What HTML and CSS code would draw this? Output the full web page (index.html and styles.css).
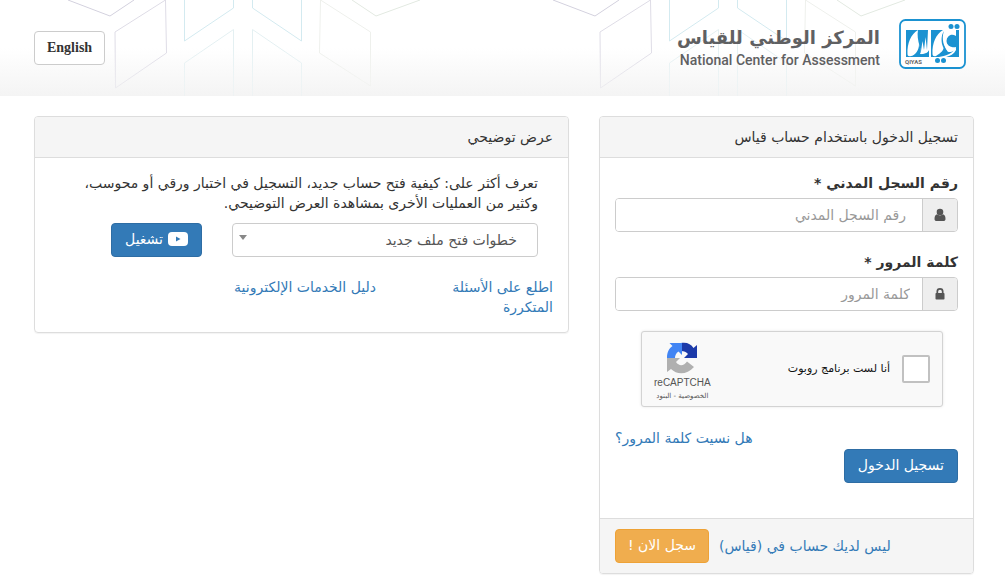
FILE: index.html
```html
<!DOCTYPE html>
<html lang="ar" dir="rtl">
<head>
<meta charset="utf-8">
<meta name="viewport" content="width=device-width, initial-scale=1">
<title>المركز الوطني للقياس</title>
<link rel="stylesheet" href="styles.css">
</head>
<body>
<header class="site-header">
  <svg class="header-pattern" aria-hidden="true" fill="none">
    <defs>
      <pattern id="hex" width="485" height="96" patternUnits="userSpaceOnUse">
        <path stroke="#d3d1de" d="M68 0L110 16L134 0"/>
        <path stroke="#dedce6" d="M165.500 0L115 32L115.500 88L166.500 53Z"/>
        <path stroke="#d3eaf0" d="M184.500 0V41L233.500 8V0M252.500 0V8L301.500 41V0"/>
        <path stroke="#e4f0f2" d="M184.500 96V63L233.500 29.500V96M252.500 96V29.500L301.500 63V96"/>
        <path stroke="#eef0ec" d="M320.500 0L370.500 32V86L319.500 53Z"/>
        <path stroke="#e2e9e1" d="M352 0L376 16L420 0"/>
      </pattern>
    </defs>
    <rect width="100%" height="96" fill="url(#hex)"/>
  </svg>
  <div class="header-inner">
    <div class="brand">
      <svg class="brand-mark" viewBox="0 0 68 51" role="img" aria-label="QIYAS">
        <rect x="1" y="1" width="65" height="48" rx="5.500" fill="#fff" stroke="#1b92d1" stroke-width="1.800"/>
        <path fill="#1b92d1" d="M7 11H30V38H7ZM32 11H60V38H32Z"/>
        <path fill="#fff" d="M19 11C12 15 8 24 8.500 35C8.500 37 10 37.500 12 37L24 35C28 34 29.500 33 30 31V11H29L28 31L26.500 18L25 31L23.500 22L22 32L20.500 27C19 21 18 16 19 11Z"/>
        <path fill="#1b92d1" d="M20 25C20 31 17 35 12 38H30V32C28 35 25 36 21 35C23 32 21 28 20 25Z"/>
        <path fill="#fff" d="M44 11C37 15 33 24 33.500 35C33.500 37 35 37.500 37 37C42 34 45 31 45 27C47 31 48 33 50 33C54 33 57 31 57 28C53 29 48 27 48 22C48 17 52 14 57 17V11Z"/>
        <path fill="#fff" d="M40 38C46 37 54 35 57 28L57 31C55 35 51 37 47 38Z"/>
        <circle cx="53" cy="22" r="5.500" fill="#1b92d1"/>
        <path fill="#1b92d1" d="M45 12C42 20 45 28 49 33C46 32 44 29 43 25C42 19 43 15 45 12Z"/>
        <g fill="#1b92d1"><circle cx="52" cy="7.500" r="2.500"/><circle cx="58" cy="7.500" r="2.500"/><circle cx="38.500" cy="41.500" r="2.500"/><circle cx="44.500" cy="41.500" r="2.500"/></g>
        <text x="6" y="45" class="mark-text">QIYAS</text>
      </svg>
      <div class="brand-name">
        <strong class="brand-ar">المركز الوطني للقياس</strong>
        <span class="brand-en" dir="ltr">National Center for Assessment</span>
      </div>
    </div>
    <button type="button" class="btn btn-lang" lang="en">English</button>
  </div>
</header>

<main class="layout">
  <section class="panel">
    <h2 class="panel-heading">تسجيل الدخول باستخدام حساب قياس</h2>
    <form>
      <div class="panel-body">
        <div class="field">
          <label for="nid">رقم السجل المدني *</label>
          <div class="input-group">
            <span class="addon"><svg width="12" height="14" viewBox="0 0 12 14" aria-hidden="true"><circle cx="6" cy="4" r="3.300" fill="#555"/><path fill="#555" d="M3 6.300C1 7 .5 9 .5 11C.5 12.500 1.500 13 2.500 13H9.500C10.500 13 11.500 12.500 11.500 11C11.500 9 11 7 9 6.300C7.500 7.800 4.500 7.800 3 6.300Z"/></svg></span>
            <input id="nid" type="text" placeholder="رقم السجل المدني">
          </div>
        </div>
        <div class="field">
          <label for="pwd">كلمة المرور *</label>
          <div class="input-group">
            <span class="addon"><svg width="10" height="14" viewBox="0 0 10 14" aria-hidden="true"><rect x=".5" y="6" width="9" height="6.500" rx=".8" fill="#555"/><path fill="none" stroke="#555" stroke-width="1.700" d="M2.300 7V4.500C2.300 1 7.700 1 7.700 4.500V7"/></svg></span>
            <input id="pwd" type="password" placeholder="كلمة المرور">
          </div>
        </div>
        <div class="captcha">
          <label class="captcha-check"><input type="checkbox"><span>أنا لست برنامج روبوت</span></label>
          <div class="captcha-brand">
            <svg width="32" height="32" viewBox="0 0 32 32" aria-hidden="true">
              <path fill="#1c3aa9" d="M15 1C21 0 25 2 27.500 6L31 3V16H18L22 12C20.500 10 18 9 15 9Z"/>
              <path fill="#4285f4" d="M1 16C1 10 3 6.500 6.500 4L3.500 1H16V13L12.500 9.500C10 11 9 13.500 9 16Z"/>
              <path fill="#b0b0b0" d="M1 16H14L10 20C13 24.500 18 24 21 19.500L28 25C21 33 11 33 5 27L1 30Z"/>
            </svg>
            <span class="captcha-name" dir="ltr">reCAPTCHA</span>
            <span class="captcha-terms"><a href="#">الخصوصية</a> - <a href="#">البنود</a></span>
          </div>
        </div>
        <div class="actions">
          <a class="forgot" href="#">هل نسيت كلمة المرور؟</a>
          <button type="submit" class="btn btn-primary">تسجيل الدخول</button>
        </div>
      </div>
      <div class="panel-footer">
        <a href="#">ليس لديك حساب في (قياس)</a>
        <button type="button" class="btn btn-warning">سجل الان !</button>
      </div>
    </form>
  </section>

  <section class="panel">
    <h2 class="panel-heading">عرض توضيحي</h2>
    <div class="panel-body">
      <div class="demo">
        <p>تعرف أكثر على: كيفية فتح حساب جديد، التسجيل في اختبار ورقي أو محوسب، وكثير من العمليات الأخرى بمشاهدة العرض التوضيحي.</p>
        <div class="demo-row">
          <div class="select-wrap"><select aria-label="العرض التوضيحي"><option>خطوات فتح ملف جديد</option></select></div>
          <button type="button" class="btn btn-primary"><svg width="20" height="14" viewBox="0 0 20 14" aria-hidden="true"><rect width="20" height="14" rx="4" fill="#fff"/><path fill="#337ab7" d="M8 4.500L12.500 7L8 9.500Z"/></svg>تشغيل</button>
        </div>
      </div>
      <nav class="links">
        <a href="#">اطلع على الأسئلة المتكررة</a>
        <a href="#">دليل الخدمات الإلكترونية</a>
      </nav>
    </div>
  </section>
</main>
</body>
</html>
```
FILE: styles.css
```css
* { box-sizing: border-box; }
body { margin: 0; background: #fff; color: #333; font: 14px/20px "DejaVu Sans", sans-serif; }
a { color: #337ab7; text-decoration: none; }
button, input, select { font: inherit; }
svg { flex: none; }

.site-header { position: relative; background: linear-gradient(#fff 50%, #f4f4f4); }
.header-pattern { position: absolute; inset: 0; width: 100%; height: 100%; -webkit-mask-image: linear-gradient(#000 50%, rgba(0, 0, 0, .3)); mask-image: linear-gradient(#000 50%, rgba(0, 0, 0, .3)); }
.header-inner { position: relative; display: flex; justify-content: space-between; align-items: center; min-height: 96px; padding: 0 38px 0 34px; }
.brand { display: flex; align-items: center; gap: 19px; padding-bottom: 8px; }
.brand-mark { width: 68px; height: 51px; }
.mark-text { font: bold 6px Roboto, sans-serif; fill: #666; direction: ltr; }
.brand-name { display: flex; flex-direction: column; padding-top: 8px; color: #5f6062; }
.brand-ar { font-size: 18px; line-height: 24px; }
.brand-en { font: 500 14px/20px Roboto, sans-serif; text-align: right; }

.btn { display: inline-flex; align-items: center; justify-content: center; gap: 5px; min-height: 34px; padding: 0 13px 2px; border: 1px solid #ccc; border-radius: 4px; white-space: nowrap; cursor: pointer; }
.btn-lang { padding: 0 12px; background: #fff; color: #333; font: bold 14px/20px "Liberation Serif", serif; }
.btn-primary { background: #337ab7; border-color: #2e6da4; color: #fff; }
.btn-warning { padding: 0 12px 2px; background: #f0ad4e; border-color: #eea236; color: #fff; }

.layout { display: grid; grid-template-columns: 375fr 535fr; gap: 30px; align-items: start; padding: 20px 31px 7px 34px; }
.panel { border: 1px solid #ddd; border-radius: 4px; box-shadow: 0 1px 1px rgba(0, 0, 0, .05); overflow: hidden; }
.panel-heading { margin: 0; padding: 10px 15px; border-bottom: 1px solid #ddd; background: #f5f5f5; font-size: 14px; font-weight: normal; line-height: 20px; }
.panel-body { padding: 15px; }
.field { margin-bottom: 20px; }
.field label { display: block; margin-bottom: 5px; font-weight: bold; }
.input-group { display: flex; height: 34px; border: 1px solid #ccc; border-radius: 4px; overflow: hidden; }
.addon { display: flex; align-items: center; justify-content: center; width: 35px; border-left: 1px solid #ccc; background: #eee; }
.input-group input { flex: 1; min-width: 0; padding: 0 16px; border: 0; background: #fff; color: #555; }
#pwd { padding: 0 12px; }
.input-group input::placeholder { color: #999; opacity: 1; }

.captcha { display: flex; justify-content: space-between; width: 302px; height: 76px; margin: 0 15px 21px; padding: 0 12px; border: 1px solid #d3d3d3; border-radius: 3px; background: #f9f9f9; box-shadow: 0 0 3px rgba(0, 0, 0, .1); color: #111; }
.captcha-check { display: flex; align-items: center; gap: 12px; font-size: 11px; }
.captcha-check input { appearance: none; width: 28px; height: 28px; margin: 0; border: 2px solid #c1c1c1; border-radius: 2px; background: #fff; }
.captcha-brand { display: flex; flex-direction: column; align-items: center; padding-top: 10px; }
.captcha-name { color: #555; font: 10px/18px "Liberation Sans", sans-serif; }
.captcha-terms { color: #555; font-size: 7px; line-height: 8px; }
.captcha-terms a { color: inherit; }

.actions { display: flex; flex-direction: column; align-items: flex-start; gap: 1px; padding-bottom: 20px; }
.forgot { align-self: flex-end; }
.panel-footer { display: flex; align-items: center; justify-content: flex-end; gap: 10px; padding: 10px 15px; border-top: 1px solid #ddd; background: #f5f5f5; }

.demo { padding: 0 15px; }
.demo p { margin: 0 0 10px; }
.demo-row { display: flex; gap: 30px; margin-bottom: 20px; }
.select-wrap { position: relative; flex: 0 1 306px; }
.select-wrap::after { content: ""; position: absolute; left: 7px; top: 12px; border: 4px solid transparent; border-top: 5px solid #888; border-bottom: 0; }
.select-wrap select { appearance: none; width: 100%; height: 34px; padding: 0 20px; border: 1px solid #ccc; border-radius: 4px; background: #fff; color: #555; }
.links { display: grid; grid-template-columns: 147px 1fr; gap: 30px; }
```
